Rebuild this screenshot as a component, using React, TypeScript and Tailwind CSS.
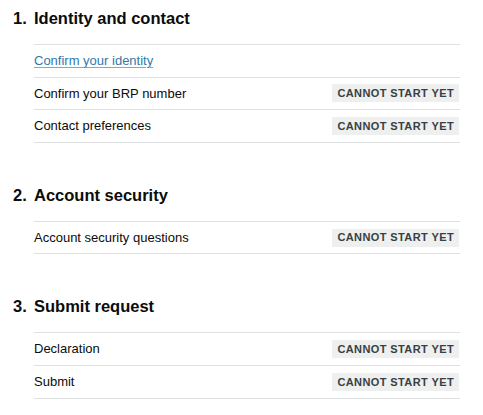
import React from "react";

type Item = { name: string; link?: boolean };
type Section = { num: string; title: string; items: Item[] };

const sections: Section[] = [
  {
    num: "1.",
    title: "Identity and contact",
    items: [
      { name: "Confirm your identity", link: true },
      { name: "Confirm your BRP number" },
      { name: "Contact preferences" },
    ],
  },
  {
    num: "2.",
    title: "Account security",
    items: [{ name: "Account security questions" }],
  },
  {
    num: "3.",
    title: "Submit request",
    items: [{ name: "Declaration" }, { name: "Submit" }],
  },
];

export default function App() {
  return (
    <div
      className="w-[483px] h-[415px] bg-white overflow-hidden text-[#0b0c0c] pt-[6px]"
      style={{ fontFamily: '"Liberation Sans", Arial, sans-serif' }}
    >
      <div className="flex flex-col gap-[40px]">
        {sections.map((s) => (
          <div key={s.num} className="flex flex-col">
            <h2 className="flex h-[24px] items-center text-[16.5px] font-bold leading-[24px]">
              <span className="w-[34px] pl-[13px] shrink-0">{s.num}</span>
              <span>{s.title}</span>
            </h2>
            <ul className="ml-[34px] w-[426px] mt-[14px] border-t border-[#dedfe0]">
              {s.items.map((it) => (
                <li
                  key={it.name}
                  className="flex h-[32.6px] items-center justify-between border-b border-[#dedfe0] text-[13px]"
                >
                  {it.link ? (
                    <a
                      href="#"
                      className="text-[#3279ab] underline underline-offset-2 decoration-1 decoration-[#7fa9c8]"
                    >
                      {it.name}
                    </a>
                  ) : (
                    <span>{it.name}</span>
                  )}
                  {!it.link && (
                    <span className="mr-[1px] h-[18px] flex items-center bg-[#eeefef] px-[5px] text-[11px] font-bold tracking-[0.4px] text-[#383f43]">
                      CANNOT START YET
                    </span>
                  )}
                </li>
              ))}
            </ul>
          </div>
        ))}
      </div>
    </div>
  );
}
